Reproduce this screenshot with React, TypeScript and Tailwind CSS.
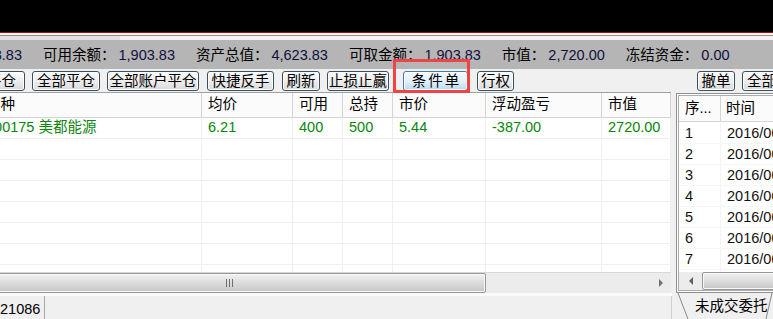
import clsx from 'clsx';

const font = "font-['Liberation_Sans','Noto_Sans_CJK_SC',sans-serif]";

type BtnProps = { label: string; className?: string; active?: boolean };

function Btn({ label, className, active }: BtnProps) {
  return (
    <div
      className={clsx(
        'h-[20px] shrink-0 rounded-[3px] border flex items-center justify-center overflow-hidden whitespace-nowrap leading-[18px] text-black',
        active
          ? 'border-[#3c7fb1] bg-linear-to-b from-[#f5fafd] via-[#e4f1fb] to-[#b6daf4] shadow-[inset_0_0_0_1px_#ffffff] tracking-[2px] pl-[2px]'
          : 'border-[#3a4f66] bg-linear-to-b from-[#fbfbfb] via-[#eeeeee] to-[#dadada] shadow-[inset_0_0_0_1px_#ffffff]',
        className,
      )}
    >
      {label}
    </div>
  );
}

const info = [
  ['可用余额', '1,903.83'],
  ['资产总值', '4,623.83'],
  ['可取金额', '1,903.83'],
  ['市值', '2,720.00'],
  ['冻结资金', '0.00'],
];

const cols = [
  { h: '品种', w: 'w-[222px]' },
  { h: '均价', w: 'w-[91px]' },
  { h: '可用', w: 'w-[50px]' },
  { h: '总持', w: 'w-[50px]' },
  { h: '市价', w: 'w-[93px]' },
  { h: '浮动盈亏', w: 'w-[116px]' },
  { h: '市值', w: 'w-[69px]' },
];

const position = ['600175 美都能源', '6.21', '400', '500', '5.44', '-387.00', '2720.00'];

function Thumb({ className, grip }: { className?: string; grip?: boolean }) {
  return (
    <div
      className={clsx(
        'h-full shrink-0 rounded-[2px] border border-[#979797] bg-linear-to-b from-[#f2f2f2] via-[#dcdcdc] to-[#c6c6c6] shadow-[inset_0_0_0_1px_#f8f8f8] flex items-center justify-center',
        className,
      )}
    >
      {grip && (
        <div className="flex gap-[2px]">
          <span className="w-[1px] h-[8px] bg-[#6f6f6f]" />
          <span className="w-[1px] h-[8px] bg-[#6f6f6f]" />
          <span className="w-[1px] h-[8px] bg-[#6f6f6f]" />
        </div>
      )}
    </div>
  );
}

export default function App() {
  return (
    <div className={clsx('relative w-[773px] h-[319px] overflow-hidden bg-[#f0f0f0] text-[14.5px] text-black', font)}>
      {/* window chrome above */}
      <div className="h-[32px] bg-black" />
      <div className="h-[1px] bg-[#cc0000]" />
      <div className="h-[2px] bg-white" />
      <div className="h-[1px] bg-[#8a8a8a]" />
      <div className="h-[4px] flex">
        <div className="w-[120px] bg-[#e2e2e2]" />
        <div className="flex-1 bg-[#f3f3f3]" />
      </div>

      {/* account summary */}
      <div className="h-[29px] bg-[#b5b5b5] flex items-center whitespace-nowrap leading-[20px]">
        <div className="w-[22px] shrink-0 overflow-hidden flex justify-end">
          <span className="shrink-0">
            资金余额：<span className="ml-[3px] text-[#101040]">1,903.83</span>
          </span>
        </div>
        {info.map(([k, v]) => (
          <span key={k} className="ml-[21px] shrink-0">
            {k}：<span className="ml-[3px] text-[#101040]">{v}</span>
          </span>
        ))}
      </div>

      {/* toolbar */}
      <div className="h-[23px] flex items-center">
        <Btn label="平仓" className="w-[47px] -ml-[22px]" />
        <Btn label="全部平仓" className="w-[68px] ml-[7px]" />
        <Btn label="全部账户平仓" className="w-[92px] ml-[7px]" />
        <Btn label="快捷反手" className="w-[67px] ml-[8px]" />
        <Btn label="刷新" className="w-[38px] ml-[8px]" />
        <Btn label="止损止赢" className="w-[62px] ml-[7px]" />
        <Btn label="条件单" active className="w-[65px] ml-[14px]" />
        <Btn label="行权" className="w-[37px] ml-[9px]" />
        <Btn label="撤单" className="w-[38px] ml-[183px]" />
        <Btn label="全部撤单" className="w-[68px] ml-[7px]" />
      </div>

      <div className="flex h-[227px]">
        {/* positions */}
        <div className="w-[676px] shrink-0 flex flex-col">
          <div className="w-[671px] h-[180px] overflow-hidden bg-white">
            <div className="-ml-[20px] w-[691px]">
              <div className="flex h-[26px] border-t border-b border-t-[#a0a0a0] border-b-[#d5d5d5] bg-[#fbfbfb]">
                {cols.map((c) => (
                  <div key={c.h} className={clsx('shrink-0 px-[6px] flex items-center border-r border-[#d5d5d5] whitespace-nowrap', c.w)}>
                    {c.h}
                  </div>
                ))}
              </div>
              {Array.from({ length: 8 }).map((_, r) => (
                <div key={r} className="flex h-[21px] border-b border-[#efefef]">
                  {cols.map((c, i) => (
                    <div key={c.h} className={clsx('shrink-0 px-[6px] flex items-center border-r border-[#efefef] whitespace-nowrap text-[#0b850b]', c.w)}>
                      {r === 0 ? position[i] : ''}
                    </div>
                  ))}
                </div>
              ))}
            </div>
          </div>
          <div className="w-[671px] h-[21px] overflow-hidden flex bg-[#ececec] border-t border-[#d8d8d8]">
            <Thumb grip className="w-[514px] -ml-[28px]" />
            <div className="flex-1" />
            <div className="w-[21px] flex items-center justify-center">
              <div className="w-0 h-0 border-y-[4px] border-y-transparent border-l-[4px] border-l-[#707070]" />
            </div>
          </div>
          <div className="h-[3px] w-[672px] bg-[#fafafa]" />
          <div className="flex-1 flex w-[672px] border-r border-[#d0d0d0]">
            <div className="w-[45px] border-r border-[#a8a8a8] pt-[2px] leading-[20px] flex items-center">21086</div>
          </div>
        </div>

        {/* pending orders */}
        <div className="w-[110px] shrink-0 flex flex-col">
          <div className="mt-[1px] h-[200px] border border-[#8f8f8f] p-[1px] bg-white">
            <div className="h-full border border-[#acacac] overflow-hidden flex flex-col">
              <div className="flex h-[26px] shrink-0 border-b border-[#d5d5d5] bg-[#fbfbfb]">
                <div className="w-[42px] px-[6px] flex items-center border-r border-[#d5d5d5]">序...</div>
                <div className="px-[5px] flex items-center whitespace-nowrap">时间</div>
              </div>
              <div className="h-[150px] shrink-0 overflow-hidden pt-[1px]">
                {[1, 2, 3, 4, 5, 6, 7, 8].map((n) => (
                  <div key={n} className="flex h-[21px] border-b border-[#f6f6f6] text-[#111]">
                    <div className="w-[42px] shrink-0 px-[6px] pt-[2px] flex items-center border-r border-[#f3f3f3]">{n}</div>
                    <div className="px-[6px] pt-[2px] flex items-center whitespace-nowrap">2016/06/08 09:31</div>
                  </div>
                ))}
              </div>
              <div className="h-[18px] shrink-0 flex bg-[#ececec]">
                <div className="w-[23px] shrink-0 flex items-center justify-center">
                  <div className="w-0 h-0 border-y-[4px] border-y-transparent border-r-[4px] border-r-[#606060]" />
                </div>
                <Thumb className="w-[120px]" />
              </div>
            </div>
          </div>
          <div className="relative h-[26px]">
            <svg className="absolute inset-0" width="110" height="26" viewBox="0 0 110 26">
              <path d="M2 0 L12 26 M96 0 L90 26" stroke="#8a8a8a" strokeWidth="1" fill="none" />
            </svg>
            <div className="pl-[19px] leading-[26px] whitespace-nowrap">未成交委托</div>
          </div>
        </div>
      </div>

      {/* highlight box */}
      <div className="absolute left-[393px] top-[59px] w-[77px] h-[34px] border-[3px] border-[#f04343]" />
    </div>
  );
}
